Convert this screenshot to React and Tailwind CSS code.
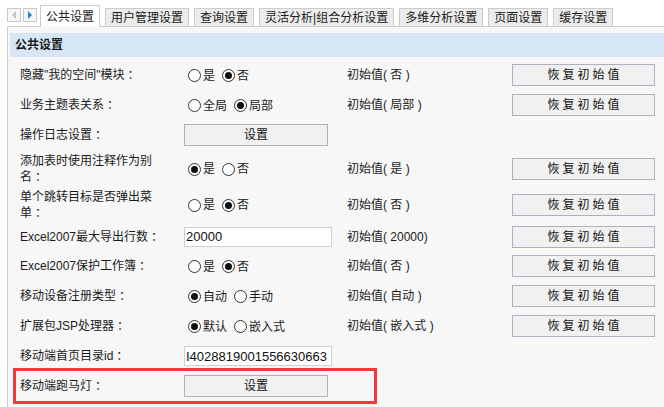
import React from 'react';

const tabs = ['公共设置', '用户管理设置', '查询设置', '灵活分析|组合分析设置', '多维分析设置', '页面设置', '缓存设置'];

const rows = [
  { label: '隐藏"我的空间"模块', type: 'radio', options: ['是', '否'], checked: 1, init: '初始值( 否 )', h: 'h-[30px]' },
  { label: '业务主题表关系', type: 'radio', options: ['全局', '局部'], checked: 1, init: '初始值( 局部 )', h: 'h-[30px]' },
  { label: '操作日志设置', type: 'button', h: 'h-[30px]' },
  { label: '添加表时使用注释作为别名', type: 'radio', options: ['是', '否'], checked: 0, init: '初始值( 是 )', h: 'h-[37px]' },
  { label: '单个跳转目标是否弹出菜单', type: 'radio', options: ['是', '否'], checked: 1, init: '初始值( 否 )', h: 'h-[35px]' },
  { label: 'Excel2007最大导出行数', type: 'input', value: '20000', init: '初始值( 20000)', h: 'h-[29px]' },
  { label: 'Excel2007保护工作簿', type: 'radio', options: ['是', '否'], checked: 1, init: '初始值( 否 )', h: 'h-[30px]' },
  { label: '移动设备注册类型', type: 'radio', options: ['自动', '手动'], checked: 0, init: '初始值( 自动 )', h: 'h-[30px]' },
  { label: '扩展包JSP处理器', type: 'radio', options: ['默认', '嵌入式'], checked: 0, init: '初始值( 嵌入式 )', h: 'h-[30px]' },
  { label: '移动端首页目录id', type: 'input', value: 'I4028819001556630663', h: 'h-[30px]' },
  { label: '移动端跑马灯', type: 'button', h: 'h-[30px]', marked: true },
];

function Radio({ checked }) {
  return (
    <span className="w-[13px] h-[13px] rounded-full border border-[#333] bg-white flex items-center justify-center shrink-0">
      {checked && <span className="w-[7px] h-[7px] rounded-full bg-[#111]" />}
    </span>
  );
}

function Control({ row }) {
  if (row.type === 'radio') {
    return (
      <div className="flex items-center pl-[4px] pt-[1px]">
        {row.options.map((opt, i) => (
          <div key={opt} className={`flex items-center ${i > 0 ? 'ml-[7px]' : ''}`}>
            <Radio checked={row.checked === i} />
            <span className="ml-[2px]">{opt}</span>
          </div>
        ))}
      </div>
    );
  }
  if (row.type === 'input') {
    return (
      <input
        readOnly
        value={row.value}
        className="w-[148px] h-[20px] bg-white border border-[#cfcfcf] px-[1px] text-[13px] text-[#111] outline-none"
      />
    );
  }
  return (
    <button className="w-[144px] h-[22px] bg-[#f1f1f1] border border-[#a9b3bf] text-[12px] text-[#111]">
      设置
    </button>
  );
}

export default function App() {
  return (
    <div className="w-[664px] h-[407px] overflow-hidden bg-white text-[12px] text-[#1a1a1a] font-['Liberation_Sans','Noto_Sans_CJK_SC',sans-serif]">
      {/* tab strip */}
      <div className="flex h-[26px]">
        <div className="flex gap-[2px] pt-[8px] pl-[7px]">
          <div className="w-[14px] h-[14px] border border-[#c8c8c8] bg-[#f6f6f6] flex items-center justify-center">
            <svg width="6" height="8" viewBox="0 0 6 8"><path d="M5 0 L1 4 L5 8 Z" fill="#c4c4c4" /></svg>
          </div>
          <div className="w-[14px] h-[14px] border border-[#c8c8c8] bg-[#f6f6f6] flex items-center justify-center">
            <svg width="6" height="8" viewBox="0 0 6 8"><path d="M1 0 L5 4 L1 8 Z" fill="#2f7fd8" /></svg>
          </div>
        </div>
        <div className="flex items-end gap-[5px] ml-[3px]">
          {tabs.map((t, i) =>
            i === 0 ? (
              <div key={t} className="relative z-10 -mb-px h-[22px] px-[5px] bg-white border border-b-0 border-[#cccccc] flex items-center leading-none">
                {t}
              </div>
            ) : (
              <div key={t} className="h-[18px] px-[5px] bg-[#ececec] border border-b-0 border-[#cccccc] flex items-center leading-none">
                {t}
              </div>
            )
          )}
        </div>
      </div>

      {/* panel */}
      <div className="ml-[7px] border-l border-t border-[#cccccc] bg-[#f7f7f7] h-[400px]">
        <div className="mt-[6px] ml-[2px] h-[24px] bg-[#d6e6f5] flex items-center pl-[5px] font-bold">
          公共设置
        </div>

        <div className="pt-[3px]">
          {rows.map((row) => (
            <div key={row.label} className={`relative flex items-center pl-[12px] ${row.h}`}>
              <div className="w-[164px] shrink-0">
                <div className="max-w-[142px] leading-[16px]">
                  {row.label}
                  <span className="inline-block h-[16px] leading-[16px] align-top font-['Noto_Sans_CJK_TC',sans-serif]">：</span>
                </div>
              </div>
              <div className="w-[163px] shrink-0 flex items-center">
                <Control row={row} />
              </div>
              <div className="w-[165px] shrink-0">{row.init}</div>
              {row.init && (
                <button className="w-[143px] h-[22px] bg-[#f1f1f1] border border-[#a9b3bf] text-[12px] text-[#111] tracking-[3px] pl-[3px]">
                  恢复初始值
                </button>
              )}
              {row.marked && (
                <div className="absolute left-[5px] -top-[3px] w-[364px] h-[36px] border-[3px] border-[#f03a3a] pointer-events-none" />
              )}
            </div>
          ))}
        </div>
      </div>
    </div>
  );
}
